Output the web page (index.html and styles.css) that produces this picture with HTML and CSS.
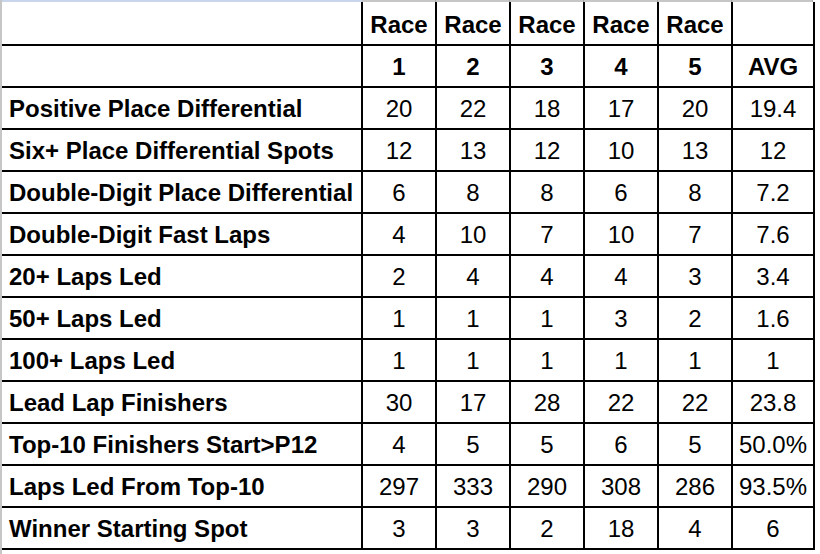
FILE: index.html
```html
<!DOCTYPE html>
<html>
<head>
<meta charset="utf-8">
<link rel="stylesheet" href="styles.css">
</head>
<body>
<div class="sheet">
  <div class="stripe">
    <div class="seg seg-label"></div>
    <div class="seg seg-race"></div>
    <div class="seg seg-race"></div>
    <div class="seg seg-race"></div>
    <div class="seg seg-race"></div>
    <div class="seg seg-race"></div>
    <div class="seg seg-avg"></div>
  </div>
  <table class="grid">
    <colgroup>
      <col class="c-label"><col class="c-race"><col class="c-race"><col class="c-race"><col class="c-race"><col class="c-race"><col class="c-avg">
    </colgroup>
    <tr class="head1">
      <td></td><th>Race</th><th>Race</th><th>Race</th><th>Race</th><th>Race</th><th></th>
    </tr>
    <tr>
      <td></td><th>1</th><th>2</th><th>3</th><th>4</th><th>5</th><th>AVG</th>
    </tr>
    <tr><td class="label">Positive Place Differential</td><td>20</td><td>22</td><td>18</td><td>17</td><td>20</td><td>19.4</td></tr>
    <tr><td class="label">Six+ Place Differential Spots</td><td>12</td><td>13</td><td>12</td><td>10</td><td>13</td><td>12</td></tr>
    <tr><td class="label">Double-Digit Place Differential</td><td>6</td><td>8</td><td>8</td><td>6</td><td>8</td><td>7.2</td></tr>
    <tr><td class="label">Double-Digit Fast Laps</td><td>4</td><td>10</td><td>7</td><td>10</td><td>7</td><td>7.6</td></tr>
    <tr><td class="label">20+ Laps Led</td><td>2</td><td>4</td><td>4</td><td>4</td><td>3</td><td>3.4</td></tr>
    <tr><td class="label">50+ Laps Led</td><td>1</td><td>1</td><td>1</td><td>3</td><td>2</td><td>1.6</td></tr>
    <tr><td class="label">100+ Laps Led</td><td>1</td><td>1</td><td>1</td><td>1</td><td>1</td><td>1</td></tr>
    <tr><td class="label">Lead Lap Finishers</td><td>30</td><td>17</td><td>28</td><td>22</td><td>22</td><td>23.8</td></tr>
    <tr><td class="label">Top-10 Finishers Start&gt;P12</td><td>4</td><td>5</td><td>5</td><td>6</td><td>5</td><td>50.0%</td></tr>
    <tr><td class="label">Laps Led From Top-10</td><td>297</td><td>333</td><td>290</td><td>308</td><td>286</td><td>93.5%</td></tr>
    <tr><td class="label">Winner Starting Spot</td><td>3</td><td>3</td><td>2</td><td>18</td><td>4</td><td>6</td></tr>
  </table>
</div>
</body>
</html>
```

FILE: styles.css
```css
html, body {
  margin: 0;
  padding: 0;
  background: #ffffff;
}

.sheet {
  width: 818px;
  height: 554px;
  border-left: 2px solid #c6c6c6;
  font-family: "Liberation Sans", Arial, sans-serif;
  color: #000;
}

.stripe {
  display: flex;
  height: 2px;
}

.seg {
  height: 2px;
  background: #c6c6c6;
  border-right: 1px solid #a8a8a8;
}

.seg-label {
  width: 359px;
  background: #c9d5ea;
  border-right: 1px solid #c9d5ea;
}

.seg-race {
  width: 73px;
}

.seg-avg {
  width: 80px;
}

.grid {
  border-collapse: separate;
  border-spacing: 0;
  table-layout: fixed;
  width: 813px;
}

.c-label { width: 361px; }
.c-race { width: 74px; }
.c-avg { width: 82px; }

.grid td, .grid th {
  height: 38px;
  padding: 2px 0 0 0;
  border-right: 2px solid #000;
  border-bottom: 2px solid #000;
  text-align: center;
  vertical-align: middle;
  font-size: 24px;
  line-height: 28px;
  font-weight: normal;
  white-space: nowrap;
  overflow: hidden;
}

.grid th {
  font-weight: bold;
}

.grid .head1 td, .grid .head1 th {
  padding-top: 4px;
  height: 38px;
}

.grid td.label {
  text-align: left;
  padding-left: 7px;
  font-weight: bold;
}
```
